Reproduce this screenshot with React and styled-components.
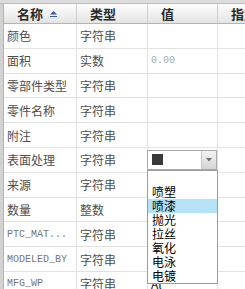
import React from 'react';
import styled, { createGlobalStyle } from 'styled-components';

const GlobalStyle = createGlobalStyle`
   body {
      margin: 0;
      background: #fff;
      overflow: hidden;
      font-family: "Noto Sans CJK SC", "Liberation Sans", sans-serif;
   }
`;

const Frame = styled.div`
   width: 245px;
   height: 289px;
   overflow: hidden;
`;

const TopBar = styled.div`
   height: 3px;
   background: #dcdcdc;
   border-bottom: 1px solid #bdbdbd;
`;

const Body = styled.div`
   display: flex;
`;

const LeftStrip = styled.div`
   width: 3px;
   flex: none;
   background: #d2d2d2;
   border-right: 1px solid #b4b4b4;
`;

const Table = styled.div`
   width: 320px;
   flex: none;
`;

const HeaderRow = styled.div`
   display: grid;
   grid-template-columns: 73px 71px 70px 1fr;
   height: 19px;
   background: linear-gradient(#fdfdfd, #e4e4e4);
   border-bottom: 1px solid #b5b5b5;
`;

const HeaderCell = styled.div`
   display: flex;
   align-items: center;
   gap: 7px;
   padding-left: 13px;
   border-right: 1px solid #cfcfcf;
   font-size: 13px;
   font-weight: bold;
   color: #2a2a2a;
   white-space: nowrap;
   overflow: hidden;
`;

const Row = styled.div`
   display: grid;
   grid-template-columns: 73px 71px 70px 1fr;
   height: 23.8px;
   border-bottom: 1px solid #e2e2e2;
`;

const Cell = styled.div`
   position: relative;
   display: flex;
   align-items: center;
   padding-left: 3px;
   border-right: 1px solid #e2e2e2;
   font-size: 12px;
   color: ${p => (p.$dark ? '#111' : '#4e4e4e')};
   white-space: nowrap;
`;

const Code = styled.span`
   font-family: "Liberation Mono", monospace;
   font-size: 10px;
   color: ${p => p.$color || '#777'};
`;

const Select = styled.div`
   box-sizing: border-box;
   width: 71px;
   height: 20px;
   margin-left: -4px;
   display: flex;
   align-items: center;
   background: #fff;
   border: 1px solid #a9a9a9;
`;

const Swatch = styled.span`
   width: 11px;
   height: 11px;
   margin-left: 4px;
   background: #3a3a3a;
`;

const ArrowButton = styled.span`
   margin-left: auto;
   width: 14px;
   height: 100%;
   display: flex;
   align-items: center;
   justify-content: center;
   background: linear-gradient(#f2f2f2, #d4d4d4);
   border-left: 1px solid #c8c8c8;
`;

const List = styled.div`
   position: absolute;
   left: -1px;
   top: 22px;
   box-sizing: border-box;
   width: 71px;
   background: #fff;
   border: 1px solid #9c9c9c;
   z-index: 2;
`;

const Option = styled.div`
   height: 14px;
   line-height: 14px;
   padding-left: 4px;
   font-size: 12px;
   color: #000;
   background: ${p => (p.$active ? '#b4e2f7' : 'transparent')};
`;

const SortIcon = () => (
   <svg width="7" height="6" viewBox="0 0 7 6">
      <path d="M3.5 0 L7 3.5 L0 3.5 Z" fill="#3b5bb0" />
      <rect x="0" y="5" width="7" height="1" fill="#3b5bb0" />
   </svg>
);

const rows = [
   { name: '颜色', type: '字符串' },
   { name: '面积', type: '实数', value: <Code $color="#aaa">0.00</Code> },
   { name: '零部件类型', type: '字符串' },
   { name: '零件名称', type: '字符串' },
   { name: '附注', type: '字符串' },
   { name: '表面处理', type: '字符串', select: true },
   { name: '来源', type: '字符串' },
   { name: '数量', type: '整数' },
   { name: <Code>PTC_MAT...</Code>, type: '字符串' },
   { name: <Code>MODELED_BY</Code>, type: '字符串' },
   { name: <Code>MFG_WP</Code>, type: '字符串', value: 'Al', dark: true }
];

const options = ['', '喷塑', '喷漆', '抛光', '拉丝', '氧化', '电泳', '电镀'];

const App = function App() {
   return (
      <Frame>
         <GlobalStyle />
         <TopBar />
         <Body>
            <LeftStrip />
            <Table>
               <HeaderRow>
                  <HeaderCell>名称<SortIcon /></HeaderCell>
                  <HeaderCell>类型</HeaderCell>
                  <HeaderCell>值</HeaderCell>
                  <HeaderCell>指定</HeaderCell>
               </HeaderRow>
               {rows.map((r, i) => (
                  <Row key={i}>
                     <Cell>{r.name}</Cell>
                     <Cell>{r.type}</Cell>
                     <Cell $dark={r.dark}>
                        {r.select ? (
                           <>
                              <Select>
                                 <Swatch />
                                 <ArrowButton>
                                    <svg width="6" height="4" viewBox="0 0 6 4">
                                       <path d="M0 0 L6 0 L3 3.5 Z" fill="#707070" />
                                    </svg>
                                 </ArrowButton>
                              </Select>
                              <List>
                                 {options.map(o => (
                                    <Option key={o || 'blank'} $active={o === '喷漆'}>{o}</Option>
                                 ))}
                              </List>
                           </>
                        ) : r.value}
                     </Cell>
                     <Cell />
                  </Row>
               ))}
            </Table>
         </Body>
      </Frame>
   );
};

export default App;
